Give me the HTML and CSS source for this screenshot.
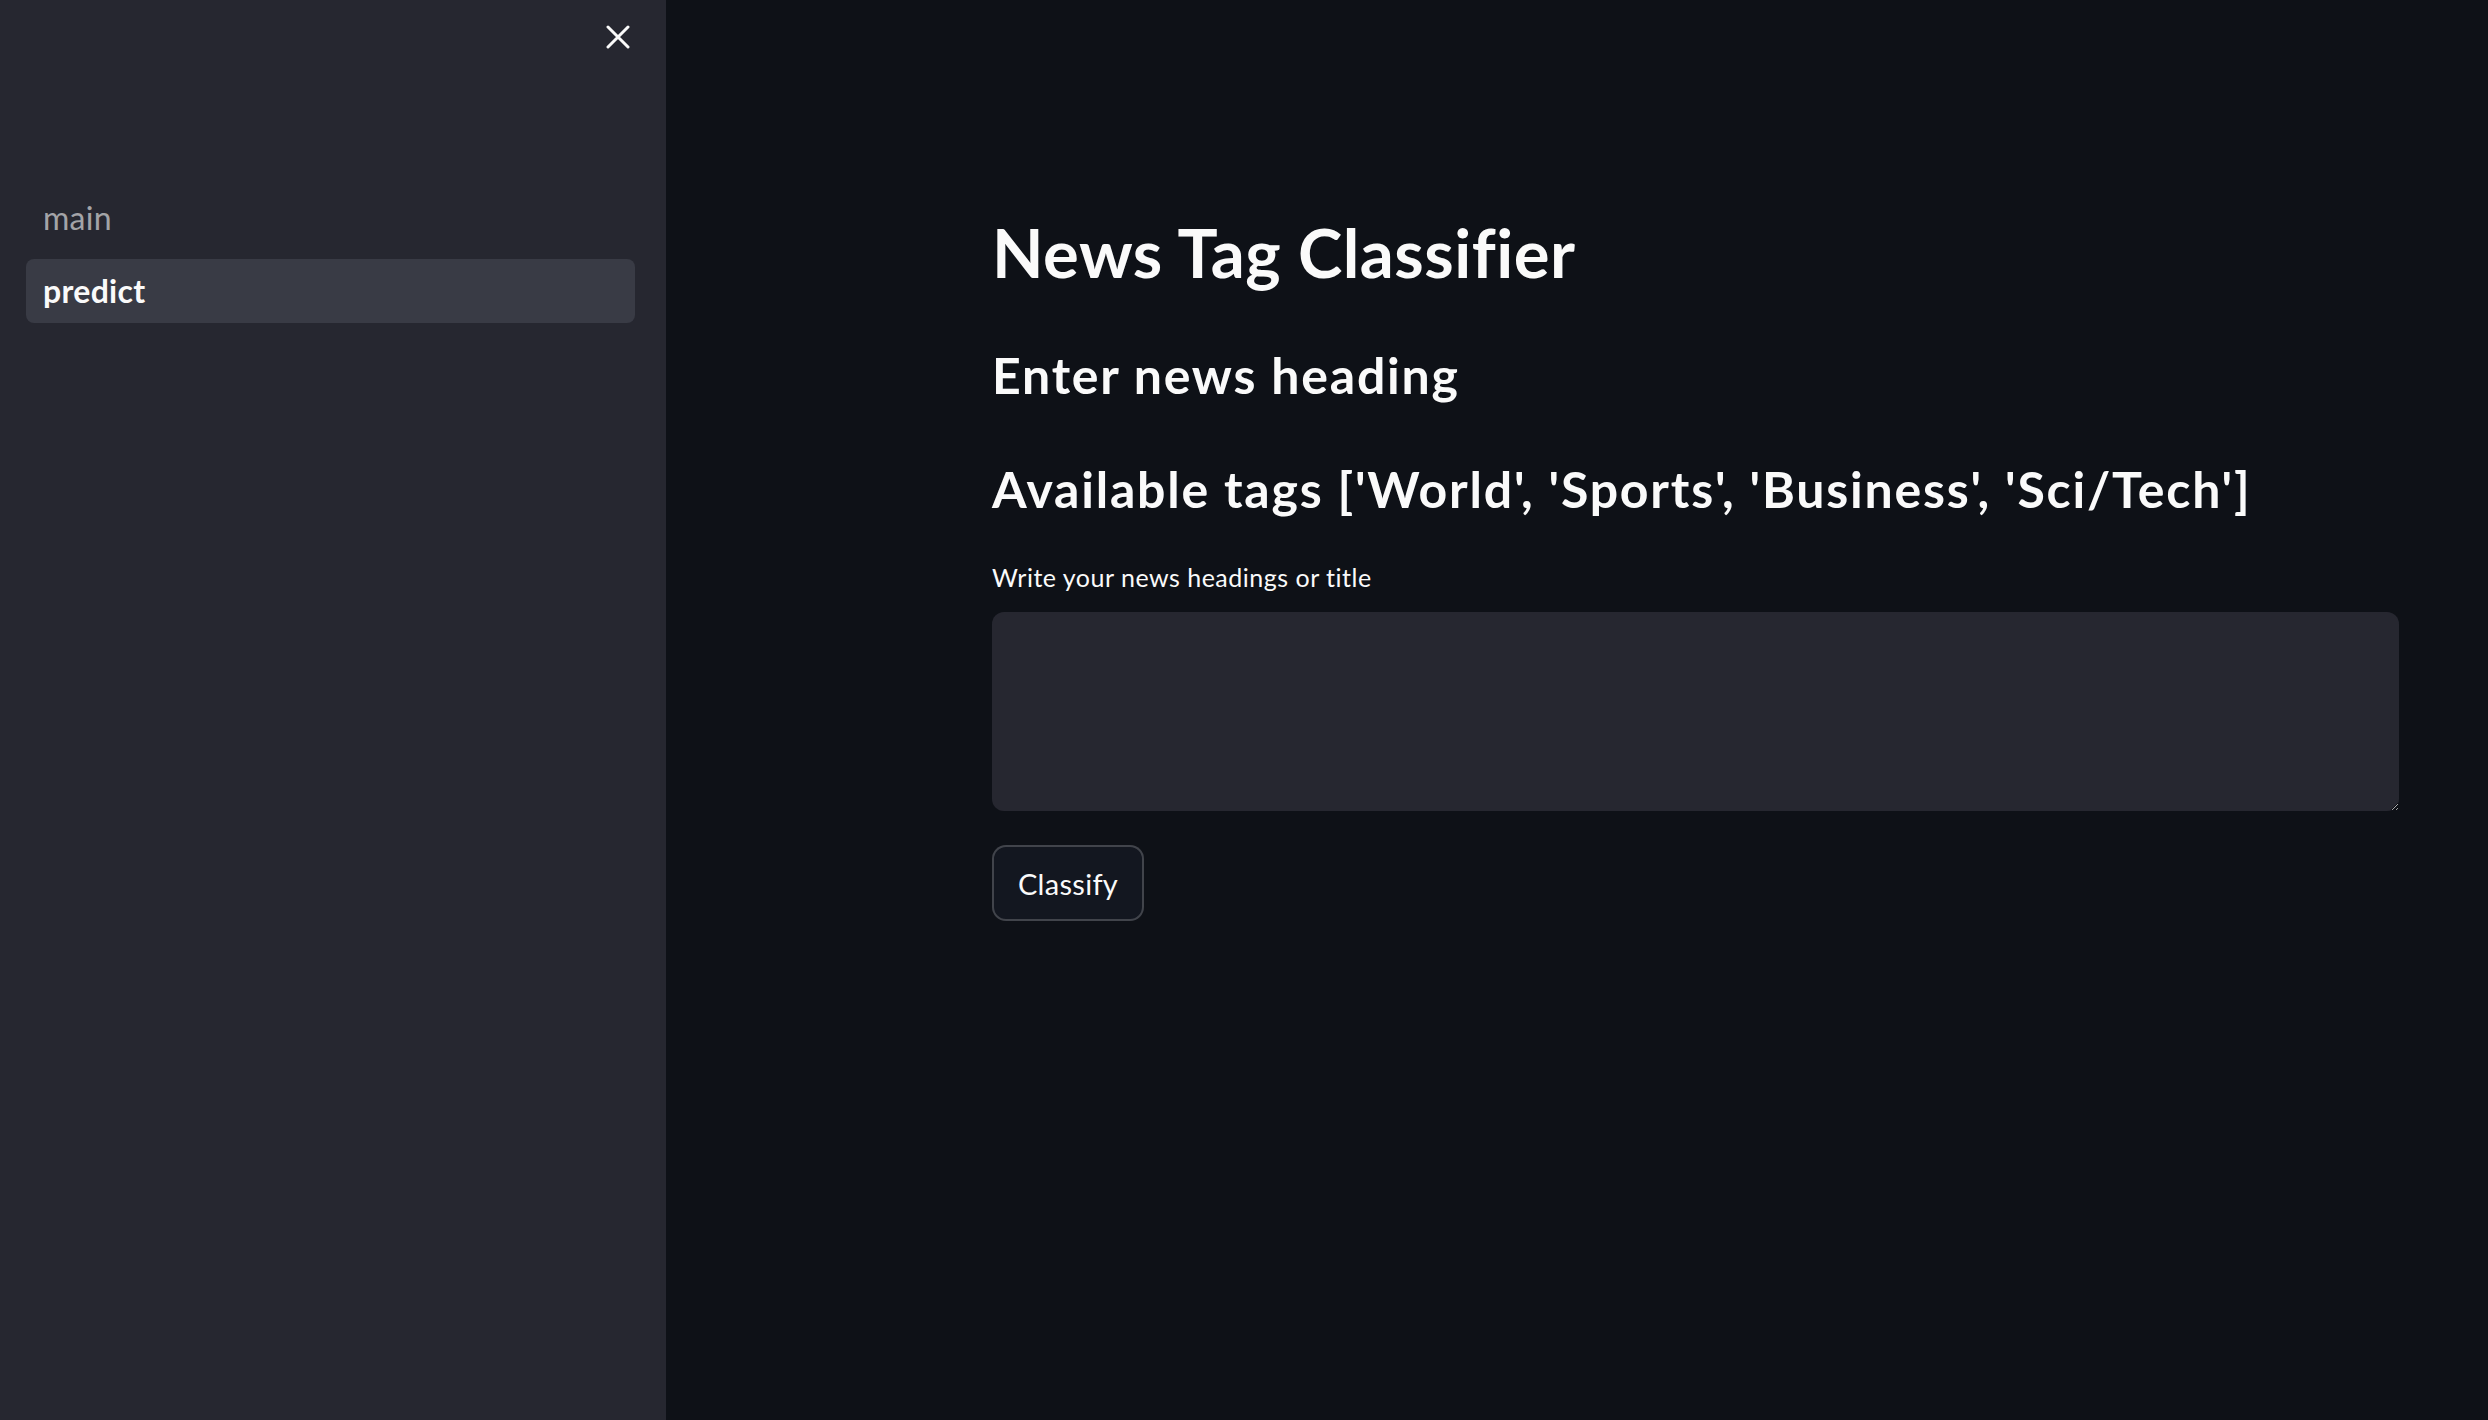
FILE: index.html
```html
<!DOCTYPE html>
<html>
<head>
<meta charset="utf-8">
<link rel="stylesheet" href="styles.css">
</head>
<body>
<div class="app">
  <aside class="sidebar">
    <div class="sidebar-top">
      <button class="close-btn" aria-label="Close sidebar">
        <svg width="24" height="24" viewBox="0 0 24 24"><path d="M2 2 L22 22 M22 2 L2 22" stroke="#fafafa" stroke-width="3" stroke-linecap="round" fill="none"/></svg>
      </button>
    </div>
    <nav class="nav">
      <a class="nav-item">main</a>
      <a class="nav-item active">predict</a>
    </nav>
  </aside>
  <main class="main">
    <div class="block">
      <h1 class="title">News Tag Classifier</h1>
      <h2 class="subhead first">Enter news heading</h2>
      <h2 class="subhead second">Available tags ['World', 'Sports', 'Business', 'Sci/Tech']</h2>
      <label class="label">Write your news headings or title</label>
      <textarea class="textarea"></textarea>
      <button class="btn">Classify</button>
    </div>
  </main>
</div>
</body>
</html>
```

FILE: styles.css
```css
* { box-sizing: border-box; }
html, body { margin: 0; padding: 0; height: 100%; }
body {
  background: #0e1117;
  color: #fafafa;
  font-family: Lato, "Noto Sans", sans-serif;
}
.app { display: flex; height: 1420px; }
.sidebar {
  width: 666px;
  flex: none;
  background: #262730;
  display: flex;
  flex-direction: column;
}
.sidebar-top {
  display: flex;
  justify-content: flex-end;
  padding: 25px 36px 0 0;
  height: 190px;
}
.close-btn {
  background: none;
  border: none;
  padding: 0;
  width: 24px;
  height: 24px;
  cursor: pointer;
}
.close-btn svg { display: block; }
.nav {
  display: flex;
  flex-direction: column;
  padding: 0 31px 0 26px;
  gap: 13px;
}
.nav-item {
  display: block;
  font-size: 32px;
  line-height: 56px;
  padding: 0 17px;
  color: rgba(250,250,250,0.6);
  border-radius: 8px;
  letter-spacing: 0.3px;
}
.nav-item.active {
  height: 64px;
  line-height: 64px;
  background: #393b45;
  color: #fafafa;
  font-weight: 700;
}
.main { flex: 1; padding-left: 326px; }
.block { width: 1407px; display: flex; flex-direction: column; align-items: flex-start; }
.title {
  margin: 212px 0 0 0;
  font-size: 67px;
  line-height: 1.2;
  font-weight: 700;
  letter-spacing: 0.5px;
}
.subhead {
  font-size: 50px;
  line-height: 1.2;
  font-weight: 700;
  margin: 0;
  letter-spacing: 1.8px;
}
.subhead.first { margin-top: 53px; }
.subhead.second { margin-top: 54px; }
.label {
  font-size: 25px;
  line-height: 1.2;
  margin-top: 43px;
  letter-spacing: 0.5px;
}
.textarea {
  margin-top: 20px;
  width: 100%;
  height: 199px;
  background: #262730;
  border: none;
  border-radius: 12px;
  color: #fafafa;
  resize: vertical;
  font-family: inherit;
}
.btn {
  margin-top: 34px;
  width: 152px;
  height: 76px;
  background: #131720;
  border: 2px solid rgba(250,250,250,0.2);
  border-radius: 14px;
  color: #fafafa;
  font-family: inherit;
  font-size: 29px;
  letter-spacing: 0.3px;
  padding: 0;
}
```
